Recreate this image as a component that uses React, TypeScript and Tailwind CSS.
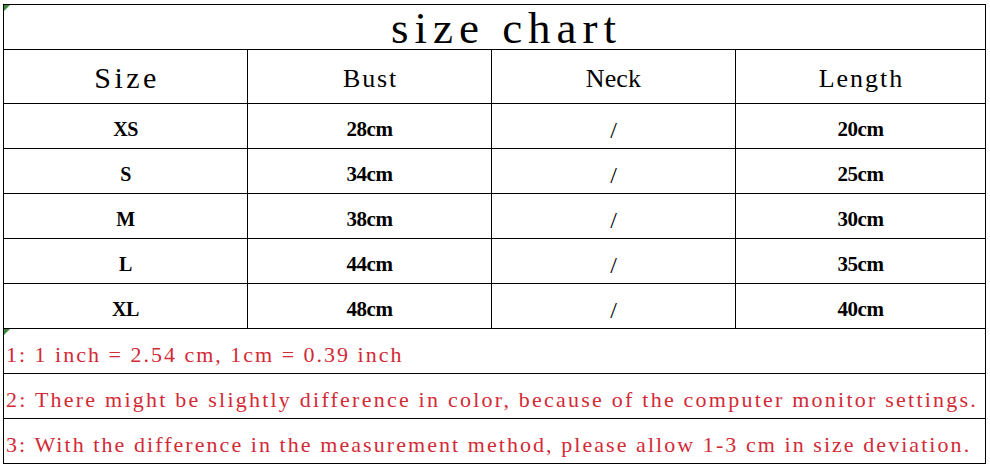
import React from "react";

const serif = { fontFamily: '"Liberation Serif", "Times New Roman", serif' };

const rows = [
  ["XS", "28cm", "20cm"],
  ["S", "34cm", "25cm"],
  ["M", "38cm", "30cm"],
  ["L", "44cm", "35cm"],
  ["XL", "48cm", "40cm"],
];

function Tri() {
  return (
    <span className="absolute left-0 top-0 h-0 w-0 border-t-[6px] border-r-[6px] border-t-[#3f8a3f] border-r-transparent" />
  );
}

export default function App() {
  return (
    <div className="h-[467px] w-[990px] bg-white pl-[3px] pt-[4px]" style={serif}>
      <div className="w-[983px] border-l border-t border-black text-black">
        {/* title */}
        <div className="relative flex h-[45px] justify-center border-r border-b border-black pl-[24px] pt-[1px]">
          <Tri />
          <span className="text-[45px] leading-[45px] tracking-[6px]">size chart</span>
        </div>
        {/* header */}
        <div className="grid h-[54px] grid-cols-[244px_244px_244px_250px]">
          <div className="flex items-center justify-center border-r border-b border-black pl-[3px] pt-[2px] text-[30px] leading-none tracking-[3.4px]">
            Size
          </div>
          <div className="flex items-center justify-center border-r border-b border-black pl-[2px] pt-[4px] text-[26px] leading-none tracking-[1.8px]">
            Bust
          </div>
          <div className="flex items-center justify-center border-r border-b border-black pt-[4px] text-[26px] leading-none tracking-[0.2px]">
            Neck
          </div>
          <div className="flex items-center justify-center border-r border-b border-black pl-[2px] pt-[4px] text-[26px] leading-none tracking-[2px]">
            Length
          </div>
        </div>
        {/* data */}
        {rows.map(([s, b, l]) => (
          <div key={s} className="grid h-[45px] grid-cols-[244px_244px_244px_250px]">
            <div className="flex items-center justify-center border-r border-b border-black pt-[6px] text-[20px] font-bold leading-none tracking-[-0.5px]">
              {s}
            </div>
            <div className="flex items-center justify-center border-r border-b border-black pt-[6px] text-[21px] font-bold leading-none tracking-[-0.4px]">
              {b}
            </div>
            <div className="flex items-center justify-center border-r border-b border-black pt-[8px] text-[24px] leading-none">
              /
            </div>
            <div className="flex items-center justify-center border-r border-b border-black pt-[6px] text-[21px] font-bold leading-none tracking-[-0.4px]">
              {l}
            </div>
          </div>
        ))}
        {/* notes */}
        <div className="relative flex h-[45px] items-center whitespace-pre border-r border-b border-black pl-[2px] pt-[7px] text-[22px] leading-none tracking-[2px] text-[#d22a36]">
          <Tri />
          1: 1 inch = 2.54 cm, 1cm = 0.39 inch
        </div>
        <div className="flex h-[45px] items-center whitespace-pre border-r border-b border-black pl-[2px] pt-[7px] text-[22px] leading-none tracking-[2.23px] text-[#d22a36]">
          2: There might be slightly difference in color, because of the computer monitor settings.
        </div>
        <div className="flex h-[45px] items-center whitespace-pre border-r border-b border-black pl-[2px] pt-[7px] text-[22px] leading-none tracking-[2.06px] text-[#d22a36]">
          3: With the difference in the measurement method, please allow 1-3 cm in size deviation.
        </div>
      </div>
    </div>
  );
}
